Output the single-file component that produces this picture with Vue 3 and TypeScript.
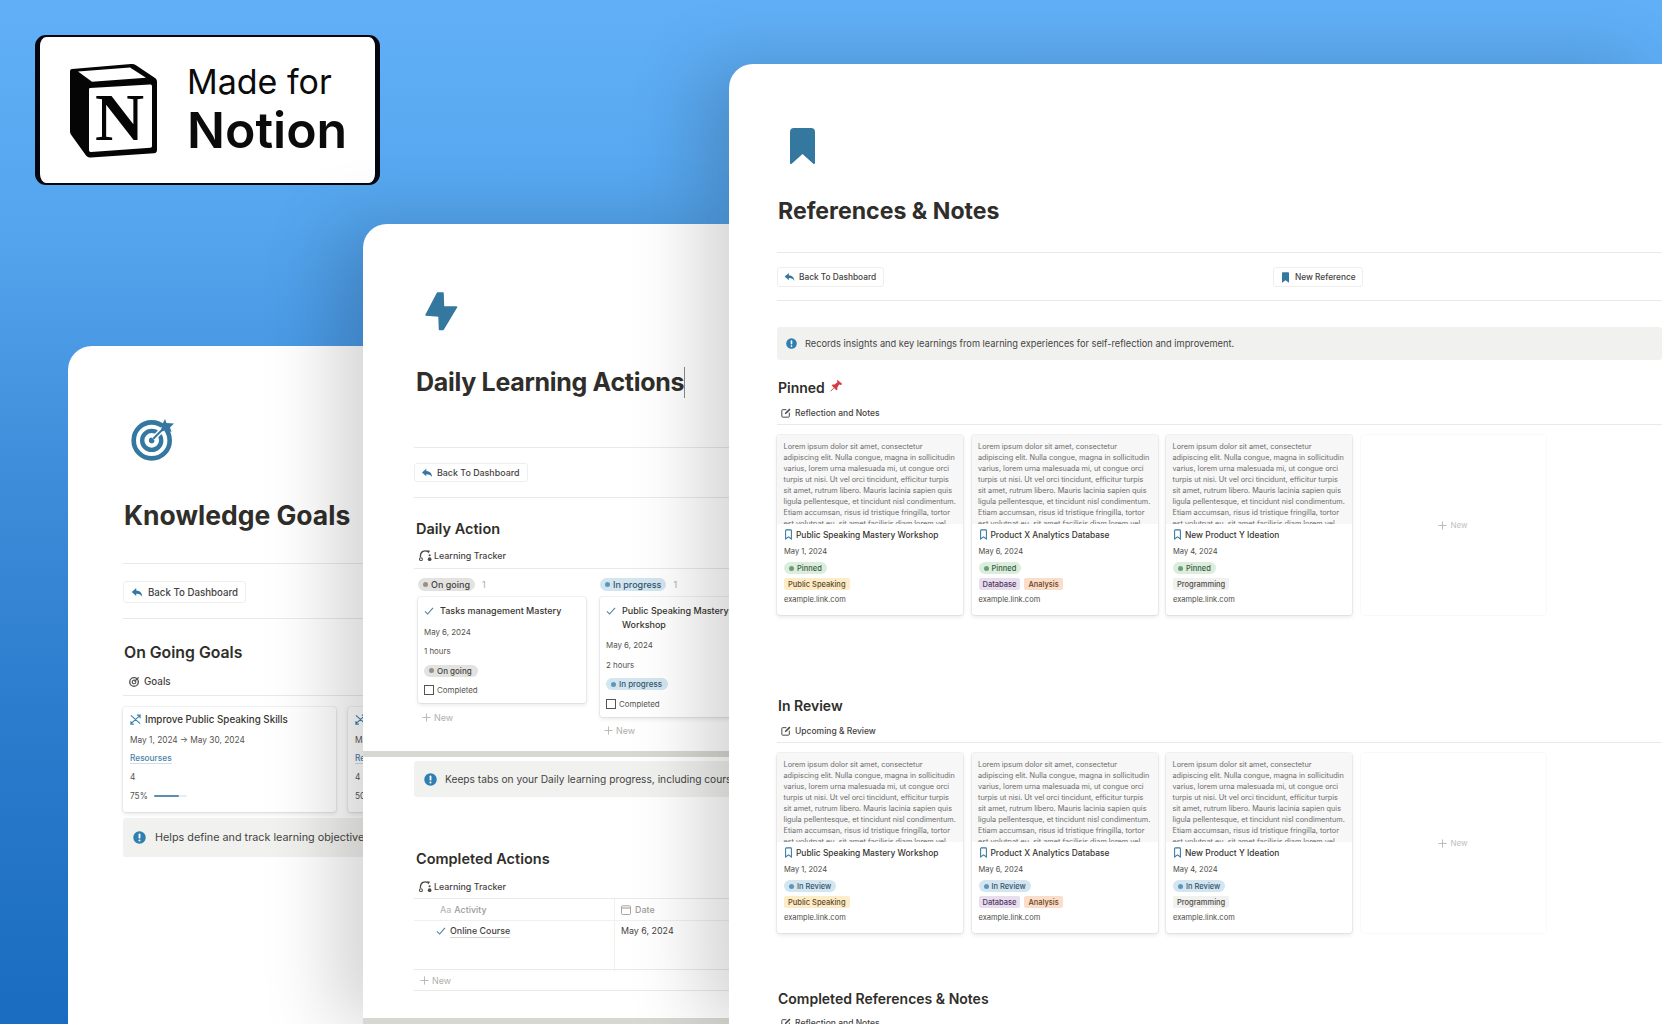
<script setup lang="ts">
interface Tag {
  label: string
  kind: string
}
interface RefCard {
  title: string
  date: string
  tags: Tag[]
}

const lorem = [
  'Lorem ipsum dolor sit amet, consectetur',
  'adipiscing elit. Nulla congue, magna in sollicitudin',
  'varius, lorem urna malesuada mi, ut congue orci',
  'turpis ut nisi. Ut vel orci tincidunt, efficitur turpis',
  'sit amet, rutrum libero. Mauris lacinia sapien quis',
  'ligula pellentesque, et tincidunt nisl condimentum.',
  'Etiam accumsan, risus id tristique fringilla, tortor',
  'est volutpat eu, sit amet facilisis diam lorem vel',
]

const refCards: RefCard[] = [
  { title: 'Public Speaking Mastery Workshop', date: 'May 1, 2024', tags: [{ label: 'Public Speaking', kind: 'orange' }] },
  {
    title: 'Product X Analytics Database',
    date: 'May 6, 2024',
    tags: [
      { label: 'Database', kind: 'purple' },
      { label: 'Analysis', kind: 'peach' },
    ],
  },
  { title: 'New Product Y Ideation', date: 'May 4, 2024', tags: [{ label: 'Programming', kind: 'gray' }] },
]

const sections = [
  { title: 'Pinned', view: 'Reflection and Notes', status: 'Pinned', kind: 'green', pin: true },
  { title: 'In Review', view: 'Upcoming & Review', status: 'In Review', kind: 'blue', pin: false },
]

const columns = [
  { status: 'On going', kind: 'grey', title: ['Tasks management Mastery'], hours: '1 hours' },
  { status: 'In progress', kind: 'blue', title: ['Public Speaking Mastery', 'Workshop'], hours: '2 hours' },
]
</script>

<template>
  <div class="stage">
    <svg class="sprite" width="0" height="0">
      <defs>
        <symbol id="reply" viewBox="0 0 16 14">
          <path d="M7 1 1 6.400 7 11.600V8.600c3.600-.2 6.300 1 8 4.100C15 7.600 12 4.500 7 4.300Z" fill="#34789f" />
        </symbol>
        <symbol id="info" viewBox="0 0 14 14">
          <circle cx="7" cy="7" r="6.700" fill="#2f7fb0" />
          <rect x="6" y="2.800" width="2" height="5.400" rx="1" fill="#fff" />
          <circle cx="7" cy="10.200" r="1.100" fill="#fff" />
        </symbol>
        <symbol id="mark-fill" viewBox="0 0 8 12">
          <path d="M1 0h6a1 1 0 0 1 1 1v11L4 9 0 12V1a1 1 0 0 1 1-1Z" fill="#34789f" />
        </symbol>
        <symbol id="mark-line" viewBox="0 0 8 12">
          <path d="M1.500.7h5a.8.8 0 0 1 .8.8v9.500L4 8.600.7 11V1.500a.8.800 0 0 1 .8-.8Z" fill="none" stroke="#34789f" stroke-width="1.200" />
        </symbol>
        <symbol id="edit" viewBox="0 0 12 12">
          <path d="M6.500 2H2a1 1 0 0 0-1 1v7a1 1 0 0 0 1 1h7a1 1 0 0 0 1-1V5.500" fill="none" stroke="#4a4a46" stroke-width="1.200" />
          <path d="M4.500 7.600 5 5.600 10 .7l1.400 1.400-5 4.900Z" fill="#4a4a46" />
        </symbol>
        <symbol id="tracker" viewBox="0 0 14 12">
          <path d="M1.500 7.500V6a5 5 0 0 1 8-4" fill="none" stroke="#4a4a46" stroke-width="1.400" />
          <path d="M8.500.2 12 .8 10 3.800Z" fill="#4a4a46" />
          <circle cx="2" cy="10" r="1.600" fill="none" stroke="#4a4a46" stroke-width="1.100" />
          <circle cx="11.500" cy="10" r="2" fill="#4a4a46" />
          <circle cx="11.500" cy="5.600" r="1.100" fill="#4a4a46" />
        </symbol>
        <symbol id="check" viewBox="0 0 12 10">
          <path d="M1 5.500 4.300 8.800 11 1.200" fill="none" stroke="#4b7f9e" stroke-width="1.300" />
        </symbol>
        <symbol id="plus" viewBox="0 0 10 10">
          <path d="M5 .5v9M.5 5h9" stroke="#b4b4b1" stroke-width="1" />
        </symbol>
      </defs>
    </svg>

    <!-- badge -->
    <div class="badge">
      <svg class="notion-mark" viewBox="0 0 90 96" width="90" height="96">
        <path d="M3 7 62 2c2-.2 3.500.2 5 1.200L86 16c1.500 1 2 2 2 4v68c0 2-1 3-3 3.200L22 95.500c-2 .1-3.500-.4-5-2L3 74c-1.200-1.500-2-3-2-5V10c0-2 .5-2.800 2-3Z" fill="#050505" />
        <path d="M9 9.500 61 5.500 77 15.800 23 19.800Z" fill="#fff" />
        <path d="M21 26 81 22.500c1-.1 2 .5 2 1.500v60c0 1-.6 1.600-1.600 1.700L22 90c-1.200.1-2-.5-2-1.700V27.500c0-.8.200-1.400 1-1.500Z" fill="#fff" />
        <text x="26" y="78" class="notion-n">N</text>
      </svg>
      <div class="badge-text">
        <div class="made">Made for</div>
        <div class="notion">Notion</div>
      </div>
    </div>

    <!-- Knowledge Goals -->
    <section class="win win-goals">
      <svg class="goal-icon" viewBox="0 0 44 44" width="44" height="44">
        <circle cx="20.700" cy="22.400" r="18" fill="none" stroke="#34789f" stroke-width="4.600" />
        <circle cx="20.700" cy="22.400" r="9.500" fill="none" stroke="#34789f" stroke-width="4.400" />
        <circle cx="20.700" cy="22.400" r="2.800" fill="#34789f" />
        <path d="M22 21 34 9" stroke="#fff" stroke-width="5" />
        <path d="M22 21 34 9" stroke="#34789f" stroke-width="2" />
        <path d="M34 1 35.500 5 43 5.500 39 9.500 40.500 14 35 12.500 30 13.500 31 7Z" fill="#34789f" />
      </svg>
      <h1 class="title title-goals">Knowledge Goals</h1>
      <hr class="rule rule-a" />
      <button class="btn btn-goals">
        <svg width="12" height="11"><use href="#reply" /></svg>
        Back To Dashboard
      </button>
      <hr class="rule rule-b" />
      <h2 class="h2 h2-goals">On Going Goals</h2>
      <div class="view view-goals">
        <svg viewBox="0 0 12 12" width="11" height="11">
          <circle cx="5.500" cy="6.500" r="4.700" fill="none" stroke="#555" stroke-width="1.500" />
          <circle cx="5.500" cy="6.500" r="2" fill="none" stroke="#555" stroke-width="1.200" />
          <path d="M6 6 10.500 1.500" stroke="#555" stroke-width="1.500" />
        </svg>
        Goals
      </div>
      <hr class="rule rule-c" />
      <div class="goal-row">
        <article v-for="n in 2" :key="n" class="goal-card">
          <div class="goal-title">
            <svg viewBox="0 0 12 12" width="11" height="11">
              <path d="M1 1.500 11 10.500M1 10.500 11 1.500M7.500 1.200H11V4.700M1 8V11H4.200" fill="none" stroke="#3d83ad" stroke-width="1.300" />
            </svg>
            Improve Public Speaking Skills
          </div>
          <div class="goal-line">May 1, 2024 → May 30, 2024</div>
          <div class="goal-line"><span class="link">Resourses</span></div>
          <div class="goal-line">4</div>
          <div class="goal-line">
            {{ n === 1 ? '75%' : '50%' }}
            <span class="meter"><i :style="{ width: n === 1 ? '75%' : '50%' }"></i></span>
          </div>
        </article>
      </div>
      <div class="callout callout-goals">
        <svg width="13" height="13"><use href="#info" /></svg>
        <span>Helps define and track learning objectives, milestones and resources for each goal.</span>
      </div>
    </section>

    <!-- Daily Learning Actions -->
    <section class="win win-daily">
      <div class="daily-body">
        <svg class="bolt" viewBox="0 0 33 39" width="33" height="39">
          <path d="M12.500 1 18 1 18.500 15 31.500 15 18 37.500 14.500 37.500 14 24 1 23Z" fill="#34789f" stroke="#34789f" stroke-width="1.500" stroke-linejoin="round" />
        </svg>
        <h1 class="title title-daily">Daily Learning Actions<i class="caret"></i></h1>
        <hr class="rule rule-d" />
        <button class="btn btn-daily">
          <svg width="12" height="10"><use href="#reply" /></svg>
          Back To Dashboard
        </button>
        <hr class="rule rule-e" />
        <h2 class="h2 h2-daily">Daily Action</h2>
        <div class="view view-daily">
          <svg width="13" height="11"><use href="#tracker" /></svg>
          Learning Tracker
        </div>
        <hr class="rule rule-f" />
        <div class="board">
          <div v-for="col in columns" :key="col.status" class="col">
            <div class="col-head">
              <span class="pill pill-lg" :class="col.kind"><i class="dot"></i>{{ col.status }}</span>
              <span class="count">1</span>
            </div>
            <article class="task">
              <div class="task-title">
                <svg width="10" height="8"><use href="#check" /></svg>
                <div>
                  <div v-for="line in col.title" :key="line">{{ line }}</div>
                </div>
              </div>
              <div class="task-line task-date">May 6, 2024</div>
              <div class="task-line">{{ col.hours }}</div>
              <div class="task-pill">
                <span class="pill pill-md" :class="col.kind"><i class="dot"></i>{{ col.status }}</span>
              </div>
              <div class="task-done"><i class="box"></i>Completed</div>
            </article>
            <div class="col-new">
              <svg width="9" height="9"><use href="#plus" /></svg>
              New
            </div>
          </div>
        </div>
      </div>
      <div class="strip"></div>
      <div class="daily-body">
        <div class="callout callout-daily">
          <svg width="13" height="13"><use href="#info" /></svg>
          <span>Keeps tabs on your Daily learning progress, including courses, workshops and time spent.</span>
        </div>
        <h2 class="h2 h2-done">Completed Actions</h2>
        <div class="view view-done">
          <svg width="13" height="11"><use href="#tracker" /></svg>
          Learning Tracker
        </div>
        <div class="table">
          <div class="thead">
            <div class="cell-name head-name"><span class="aa">Aa</span>Activity</div>
            <div class="cell-date head-date">
              <svg viewBox="0 0 10 10" width="10" height="10">
                <rect x=".5" y=".8" width="9" height="8.700" rx="1" fill="none" stroke="#a5a5a2" />
                <path d="M.5 3h9" stroke="#a5a5a2" stroke-width="1.200" />
              </svg>
              Date
            </div>
          </div>
          <div class="tbody">
            <div class="cell-name body-name">
              <svg width="10" height="8"><use href="#check" /></svg>
              <span class="under">Online Course</span>
            </div>
            <div class="cell-date body-date">May 6, 2024</div>
          </div>
          <div class="tnew">
            <svg width="9" height="9"><use href="#plus" /></svg>
            New
          </div>
        </div>
      </div>
      <div class="strip strip-end"></div>
    </section>

    <!-- References & Notes -->
    <section class="win win-refs">
      <svg class="mark-big" viewBox="0 0 25 36" width="25" height="36">
        <path d="M4 0h17a4 4 0 0 1 4 4v31a1 1 0 0 1-1.700.7L12.500 26 1.700 35.700A1 1 0 0 1 0 35V4a4 4 0 0 1 4-4Z" fill="#34789f" />
      </svg>
      <h1 class="title title-refs">References &amp; Notes</h1>
      <hr class="rule rule-g" />
      <div class="ref-btns">
        <button class="btn btn-refs">
          <svg width="11" height="10"><use href="#reply" /></svg>
          Back To Dashboard
        </button>
        <button class="btn btn-new-ref">
          <svg width="7" height="11"><use href="#mark-fill" /></svg>
          New Reference
        </button>
      </div>
      <hr class="rule rule-h" />
      <div class="callout callout-refs">
        <svg width="11" height="11"><use href="#info" /></svg>
        <span>Records insights and key learnings from learning experiences for self-reflection and improvement.</span>
      </div>

      <div v-for="(sec, i) in sections" :key="sec.title" class="ref-section" :class="{ later: i > 0 }">
        <h2 class="h2 h2-ref">
          {{ sec.title }}
          <svg v-if="sec.pin" class="pin" viewBox="0 0 14 14" width="13" height="13">
            <path d="M8 .8 13.200 5.500 11.800 6.400 9.800 6 7.800 9.400 8 11.500 6.800 12.200 1.800 7 2.800 5.800 4.800 6 8 3.400 7.600 1.800Z" fill="#d43c44" />
            <path d="M4 9.800 .8 13.200" stroke="#a3565a" stroke-width="1" />
          </svg>
        </h2>
        <div class="view view-ref">
          <svg width="10" height="10"><use href="#edit" /></svg>
          {{ sec.view }}
        </div>
        <hr class="rule rule-i" />
        <div class="gallery">
          <article v-for="card in refCards" :key="card.title" class="ref-card">
            <div class="preview">
              <div v-for="line in lorem" :key="line" class="preview-line">{{ line }}</div>
            </div>
            <div class="ref-title">
              <svg width="7" height="11"><use href="#mark-line" /></svg>
              {{ card.title }}
            </div>
            <div class="ref-line">{{ card.date }}</div>
            <div class="ref-tags">
              <span class="pill pill-sm" :class="sec.kind"><i class="dot"></i>{{ sec.status }}</span>
            </div>
            <div class="ref-tags">
              <span v-for="tag in card.tags" :key="tag.label" class="tag" :class="tag.kind">{{ tag.label }}</span>
            </div>
            <div class="ref-line">example.link.com</div>
          </article>
          <div class="new-card">
            <svg width="9" height="9"><use href="#plus" /></svg>
            New
          </div>
        </div>
      </div>

      <h2 class="h2 h2-last">Completed References &amp; Notes</h2>
      <div class="view view-ref view-last">
        <svg width="10" height="10"><use href="#edit" /></svg>
        Reflection and Notes
      </div>
    </section>
  </div>
</template>

<style>
html,
body {
  margin: 0;
  overflow: hidden;
}
</style>

<style scoped>
.stage {
  position: relative;
  width: 1662px;
  height: 1024px;
  overflow: hidden;
  font-family: Inter, "Noto Sans", sans-serif;
  color: #37352f;
  background: linear-gradient(180deg, #61b0f7 0, #54a5ee 22%, #3f8edb 45%, #2b7ccd 70%, #1a6cc0 100%);
}
.sprite {
  position: absolute;
}
svg {
  flex: none;
  display: block;
}

/* badge */
.badge {
  position: absolute;
  left: 35px;
  top: 35px;
  box-sizing: border-box;
  width: 345px;
  height: 150px;
  background: #fff;
  border: solid #05060f;
  border-width: 2px 5px;
  border-radius: 11px;
  display: flex;
  align-items: flex-start;
}
.notion-mark {
  margin: 25px 0 0 29px;
}
.notion-n {
  font-family: "Liberation Serif", serif;
  font-weight: 700;
  font-size: 68px;
  fill: #050505;
}
.badge-text {
  margin: 25px 0 0 28px;
  color: #0b0b0b;
}
.made {
  font-size: 34px;
  line-height: 40px;
  font-weight: 400;
}
.notion {
  font-size: 50px;
  line-height: 58px;
  font-weight: 600;
  margin-top: -1px;
}

/* windows */
.win {
  position: absolute;
  background: #fff;
  border-radius: 24px 0 0 0;
  overflow: hidden;
  box-sizing: border-box;
}
.win-goals {
  left: 68px;
  top: 346px;
  width: 300px;
  height: 678px;
  padding: 72px 0 0 55px;
}
.win-daily {
  left: 363px;
  top: 224px;
  width: 370px;
  height: 800px;
  box-shadow: -30px 0 70px rgba(0, 0, 0, 0.17);
}
.win-refs {
  left: 729px;
  top: 64px;
  width: 933px;
  height: 960px;
  padding: 64px 0 0 48px;
  box-shadow: -30px 0 70px rgba(0, 0, 0, 0.17);
}
.daily-body {
  padding-left: 51px;
}

.title {
  margin: 0;
  font-weight: 700;
  line-height: 40px;
  color: #2f2e2a;
  white-space: nowrap;
}
.h2 {
  margin: 0;
  font-weight: 600;
  color: #2f2e2a;
  white-space: nowrap;
}
.rule {
  margin: 0;
  border: 0;
  height: 1px;
  background: #e9e9e7;
}
.btn {
  display: flex;
  align-items: center;
  box-sizing: border-box;
  padding: 0;
  background: #fff;
  border: 1px solid #eeeeec;
  border-radius: 3px;
  font-family: inherit;
  font-weight: 500;
  color: #44433f;
  white-space: nowrap;
}
.view {
  display: flex;
  align-items: center;
  height: 18px;
  font-weight: 500;
  color: #44433f;
  white-space: nowrap;
}
.callout {
  display: flex;
  align-items: center;
  background: #f1f1ef;
  border-radius: 3px;
  white-space: nowrap;
  color: #45443f;
}

/* goals window */
.goal-icon {
  margin-left: 8px;
}
.title-goals {
  margin: 33px 0 0 1px;
  font-size: 26.500px;
}
.rule-a {
  margin-top: 28px;
}
.btn-goals {
  margin-top: 17px;
  width: 123px;
  height: 22px;
  font-size: 9.700px;
  padding-left: 7px;
  gap: 5px;
}
.rule-b {
  margin-top: 15px;
}
.h2-goals {
  margin: 22px 0 0 1px;
  font-size: 15.800px;
  line-height: 24px;
}
.view-goals {
  margin: 7px 0 0 6px;
  font-size: 9.800px;
  gap: 4px;
}
.rule-c {
  margin-top: 5px;
}
.goal-row {
  display: flex;
  gap: 12px;
  margin-top: 11px;
}
.goal-card {
  flex: none;
  box-sizing: border-box;
  width: 213px;
  height: 105px;
  padding: 3px 0 0 7px;
  background: #fff;
  border-radius: 3px;
  box-shadow: 0 0 0 1px rgba(15, 15, 15, 0.05), 0 2px 4px rgba(15, 15, 15, 0.1);
  font-size: 8.300px;
  color: #55544f;
}
.goal-title {
  display: flex;
  align-items: center;
  gap: 4px;
  height: 18.500px;
  margin-bottom: 2.500px;
  font-size: 9.800px;
  font-weight: 500;
  color: #37352f;
  white-space: nowrap;
}
.goal-line {
  display: flex;
  align-items: center;
  height: 18.500px;
  white-space: nowrap;
}
.link {
  font-weight: 500;
  color: #4a83a8;
  border-bottom: 1px solid #cfdde6;
}
.meter {
  display: block;
  position: relative;
  width: 33px;
  height: 2.500px;
  margin-left: 6px;
  background: #e6eef2;
  border-radius: 2px;
}
.meter i {
  display: block;
  height: 100%;
  background: #5a8fb0;
  border-radius: 2px;
}
.callout-goals {
  margin-top: 6px;
  height: 39px;
  padding-left: 10px;
  gap: 9px;
  font-size: 10.800px;
}

/* daily window */
.bolt {
  margin: 68px 0 0 11px;
}
.title-daily {
  margin: 31px 0 0 2px;
  font-size: 25px;
  letter-spacing: -0.3px;
  display: flex;
  align-items: center;
}
.caret {
  display: block;
  width: 1px;
  height: 31px;
  background: #8a8a88;
}
.rule-d {
  margin-top: 45px;
}
.btn-daily {
  margin-top: 15px;
  width: 114px;
  height: 19px;
  font-size: 8.900px;
  padding-left: 6px;
  gap: 4px;
}
.rule-e {
  margin-top: 15px;
}
.h2-daily {
  margin: 19px 0 0 2px;
  font-size: 14.500px;
  line-height: 24px;
}
.view-daily {
  margin: 5.500px 0 0 5px;
  font-size: 8.900px;
  gap: 2px;
}
.rule-f {
  margin-top: 3.500px;
}
.board {
  display: flex;
  gap: 14px;
  height: 173px;
  margin: 9px 0 0 4px;
}
.col {
  flex: none;
  width: 168px;
}
.col + .col {
  width: 180px;
}
.col-head {
  display: flex;
  align-items: center;
  height: 13px;
  font-size: 9px;
}
.count {
  margin-left: 7px;
  color: #a9a9a6;
}
.task {
  box-sizing: border-box;
  margin-top: 6px;
  padding: 7px 0 7px 6px;
  background: #fff;
  border-radius: 3px;
  box-shadow: 0 0 0 1px rgba(15, 15, 15, 0.05), 0 2px 4px rgba(15, 15, 15, 0.1);
  font-size: 7.900px;
  color: #55544f;
}
.task-title {
  display: flex;
  gap: 6px;
  font-size: 9px;
  line-height: 13.500px;
  font-weight: 500;
  color: #37352f;
  white-space: nowrap;
}
.task-title svg {
  margin-top: 3px;
}
.task-line {
  margin-top: 6.500px;
  line-height: 13px;
}
.task-date {
  margin-top: 8px;
}
.task-pill {
  display: flex;
  margin-top: 6.500px;
  height: 12px;
}
.task-done {
  display: flex;
  align-items: center;
  gap: 3px;
  height: 12px;
  margin-top: 7.500px;
}
.box {
  display: block;
  box-sizing: border-box;
  width: 10px;
  height: 10px;
  border: 1px solid #55544f;
}
.col-new {
  display: flex;
  align-items: center;
  gap: 3px;
  margin: 8px 0 0 4px;
  height: 12px;
  font-size: 9px;
  color: #b0b0ad;
}
.strip {
  height: 6px;
  background: #d8d8d3;
}
.strip-end {
  height: 7px;
  margin-top: 27px;
}
.callout-daily {
  margin-top: 4px;
  height: 36px;
  padding-left: 10px;
  gap: 8px;
  font-size: 10.200px;
}
.h2-done {
  margin: 50px 0 0 2px;
  font-size: 14.500px;
  line-height: 24px;
}
.view-done {
  margin: 6px 0 0 5px;
  font-size: 8.900px;
  gap: 2px;
}
.table {
  margin-top: 3px;
  border-top: 1px solid #e9e9e7;
  font-size: 8.900px;
}
.thead {
  display: flex;
  height: 21px;
  border-bottom: 1px solid #f0f0ee;
  align-items: center;
  color: #9b9a97;
  font-weight: 500;
}
.cell-name {
  box-sizing: border-box;
  width: 200px;
  height: 100%;
  display: flex;
  align-items: center;
  flex: none;
}
.cell-date {
  display: flex;
  align-items: center;
  gap: 4px;
  padding-left: 6px;
  border-left: 1px solid #f0f0ee;
  height: 100%;
  flex: 1;
}
.head-name {
  padding-left: 26px;
}
.aa {
  margin-right: 3px;
  color: #b7b7b4;
}
.tbody {
  display: flex;
  height: 48px;
  border-bottom: 1px solid #e9e9e7;
  color: #44433f;
}
.body-name,
.body-date {
  align-items: flex-start;
  padding-top: 3px;
}
.body-name {
  padding-left: 22px;
  gap: 4px;
  font-weight: 500;
}
.body-name svg {
  margin-top: 3px;
}
.under {
  border-bottom: 1px solid #d5d5d3;
  line-height: 13px;
}
.body-date {
  line-height: 14px;
}
.tnew {
  display: flex;
  align-items: center;
  gap: 3px;
  height: 20px;
  padding-left: 6px;
  border-bottom: 1px solid #e9e9e7;
  color: #b0b0ad;
}

/* pills */
.pill {
  display: inline-flex;
  align-items: center;
  border-radius: 999px;
  white-space: nowrap;
  font-weight: 500;
}
.pill-lg {
  height: 13px;
  padding: 0 5px 0 5px;
  gap: 3px;
  font-size: 9px;
}
.pill-md {
  height: 12px;
  padding: 0 6px 0 5px;
  gap: 3px;
  font-size: 8px;
}
.pill-sm {
  height: 12px;
  padding: 0 5px 0 5px;
  gap: 3px;
  font-size: 7.500px;
}
.dot {
  display: block;
  width: 5px;
  height: 5px;
  border-radius: 50%;
}
.grey {
  background: #e3e2e0;
  color: #44423e;
}
.grey .dot {
  background: #91918e;
}
.blue {
  background: #d3e5ef;
  color: #33556c;
}
.blue .dot {
  background: #5b97bd;
}
.green {
  background: #dbeddb;
  color: #3b5a47;
}
.green .dot {
  background: #6c9b7d;
}

/* references window */
.mark-big {
  margin-left: 13px;
}
.title-refs {
  margin: 27px 0 0 1px;
  font-size: 23.100px;
}
.rule-g {
  margin-top: 21px;
}
.ref-btns {
  display: flex;
  margin-top: 14px;
}
.btn-refs {
  width: 107px;
  height: 20px;
  font-size: 8.300px;
  padding-left: 6px;
  gap: 4px;
}
.btn-new-ref {
  width: 90px;
  height: 20px;
  margin-left: 389px;
  font-size: 8.300px;
  padding-left: 8px;
  gap: 6px;
}
.rule-h {
  margin-top: 13px;
}
.callout-refs {
  margin-top: 26px;
  height: 33px;
  padding-left: 9px;
  gap: 8px;
  font-size: 9.250px;
}
.h2-ref {
  display: flex;
  align-items: center;
  gap: 5px;
  margin: 16px 0 0 1px;
  height: 22px;
  font-size: 14px;
}
.later .h2-ref {
  margin-top: 79px;
}
.view-ref {
  margin: 5.500px 0 0 4px;
  font-size: 8.500px;
  gap: 4px;
}
.rule-i {
  margin-top: 2.500px;
}
.gallery {
  display: flex;
  gap: 8.500px;
  margin-top: 10px;
}
.ref-card {
  flex: none;
  box-sizing: border-box;
  width: 186px;
  height: 180px;
  border-radius: 3px;
  background: #fff;
  overflow: hidden;
  box-shadow: 0 0 0 1px rgba(15, 15, 15, 0.05), 0 2px 4px rgba(15, 15, 15, 0.1);
  color: #4c4b46;
}
.preview {
  box-sizing: border-box;
  height: 89px;
  padding: 6px 0 0 6.500px;
  background: #f7f7f7;
  overflow: hidden;
}
.preview-line {
  font-size: 7.300px;
  line-height: 11px;
  white-space: nowrap;
  color: #6d6c68;
}
.ref-title {
  display: flex;
  align-items: center;
  gap: 4px;
  height: 12px;
  margin: 4.500px 0 0 8px;
  font-size: 8.400px;
  font-weight: 500;
  color: #37352f;
  white-space: nowrap;
}
.ref-line {
  height: 12px;
  line-height: 12px;
  margin: 5.500px 0 0 7px;
  font-size: 7.500px;
  white-space: nowrap;
}
.ref-tags {
  display: flex;
  gap: 4px;
  height: 12px;
  margin: 4px 0 0 7px;
}
.ref-tags + .ref-line {
  margin-top: 4px;
}
.tag {
  display: inline-flex;
  align-items: center;
  height: 12px;
  padding: 0 4px;
  border-radius: 2px;
  font-size: 7.500px;
  font-weight: 500;
  white-space: nowrap;
}
.orange {
  background: #fdecc8;
  color: #5e4a2a;
}
.purple {
  background: #e8deee;
  color: #4d3560;
}
.peach {
  background: #fadec9;
  color: #6a3e1e;
}
.gray {
  background: #f1f1ef;
  color: #4c4b46;
}
.new-card {
  flex: none;
  width: 185px;
  height: 180px;
  display: flex;
  align-items: center;
  justify-content: center;
  gap: 3px;
  border-radius: 3px;
  box-shadow: 0 0 0 1px rgba(15, 15, 15, 0.025);
  font-size: 8px;
  color: #c0c0bd;
}
.pin {
  display: block;
  margin-top: -4px;
}
.h2-last {
  margin: 54.500px 0 0 1px;
  line-height: 22px;
  font-size: 14px;
}
.view-last {
  margin-top: 4.500px;
}
</style>
